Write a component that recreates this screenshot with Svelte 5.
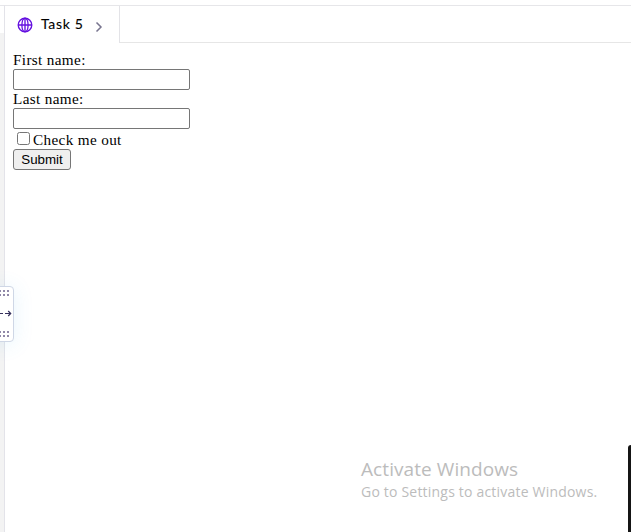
<script>
  let first = $state('');
  let last = $state('');
  let checked = $state(false);
  const dotRows = [0, 4];
  const dotCols = [-1, 3, 7];
</script>

{#snippet dots()}
  <svg class="dots" width="9" height="6" viewBox="0 0 9 6" shape-rendering="crispEdges">
    {#each dotRows as y}
      {#each dotCols as x}
        <rect {x} {y} width="2" height="2" />
      {/each}
    {/each}
  </svg>
{/snippet}

<div class="page">
  <div class="gutter"></div>
  <main>
    <header>
      <div class="tab">
        <svg class="globe" width="16" height="16" viewBox="0 0 16 16">
          <circle cx="8" cy="8" r="6.8" />
          <ellipse cx="8" cy="8" rx="3.1" ry="6.8" />
          <path d="M1.2 8h13.6M8 1.2v13.6" />
        </svg>
        <span>Task 5</span>
        <svg class="chevron" width="8" height="12" viewBox="0 0 8 12"><path d="M1.5 1.5 6 6 1.5 10.5" /></svg>
      </div>
      <div class="rest"></div>
    </header>
    <form onsubmit={(e) => e.preventDefault()}>
      <label for="first">First name:</label>
      <input id="first" class="field" type="text" bind:value={first} />
      <label for="last">Last name:</label>
      <input id="last" class="field" type="text" bind:value={last} />
      <div class="check">
        <input id="check" type="checkbox" bind:checked />
        <label for="check">Check me out</label>
      </div>
      <button>Submit</button>
    </form>
  </main>

  <div class="handle">
    {@render dots()}
    <svg class="arrow" width="12" height="7" viewBox="0 0 12 7"><path d="M0 3.5h3M5 3.5h6M8.2 1l2.5 2.5L8.2 6" /></svg>
    {@render dots()}
  </div>
  <div class="watermark">
    <div class="big">Activate Windows</div>
    <div class="small">Go to Settings to activate Windows.</div>
  </div>
  <div class="edge"></div>
</div>

<style>
  .page {
    position: relative;
    box-sizing: border-box;
    width: 631px;
    height: 532px;
    padding-top: 5px;
    display: flex;
    overflow: hidden;
    background: #fff;
    font-family: "Liberation Serif", serif;
    color: #000;
  }
  .gutter {
    box-sizing: border-box;
    width: 4px;
    border-top: 1px solid #e6e6ea;
    background: linear-gradient(#fff 27px, #f3f3f3 27px);
  }
  main {
    flex: 1;
    border-left: 1px solid #e3e3e9;
  }
  header {
    display: flex;
    height: 38px;
    border-top: 1px solid #e6e6e9;
    box-sizing: border-box;
  }
  .tab {
    box-sizing: border-box;
    width: 115px;
    border-right: 1px solid #e3e3e7;
    padding-left: 12px;
    display: flex;
    align-items: center;
    font: 400 14px/18px Lato, sans-serif;
  }
  .tab span {
    width: 42px;
    margin: -1px 12px 0 8px;
    letter-spacing: 0.65px;
    white-space: nowrap;
    -webkit-text-stroke: 0.1px #000;
  }
  .rest {
    flex: 1;
    border-bottom: 1px solid #e6e6e6;
  }
  .globe {
    fill: none;
    stroke: #6410e0;
    stroke-width: 1.35;
  }
  .chevron {
    margin-top: 4px;
    fill: none;
    stroke: #78758f;
    stroke-width: 1.5;
  }
  form {
    display: flex;
    flex-direction: column;
    align-items: flex-start;
    padding: 8px 8px 0;
    font-size: 15.2px;
    letter-spacing: 0.36px;
  }
  form > label {
    height: 18px;
    line-height: 18px;
  }
  .field {
    box-sizing: border-box;
    width: 177px;
    height: 21px;
    margin: 0;
    border: 1px solid #767676;
    border-radius: 2px;
    padding: 1px 2px;
    font: 13px "Liberation Sans", sans-serif;
  }
  .check {
    display: flex;
    align-items: center;
    height: 20px;
  }
  .check input {
    margin: 0 3px 2px 4px;
    width: 13px;
    height: 13px;
  }
  .check label {
    line-height: 18px;
    margin-top: 2px;
  }
  button {
    box-sizing: border-box;
    width: 58px;
    height: 21px;
    padding: 0;
    border: 1px solid #767676;
    border-radius: 3px;
    background: #efefef;
    color: #000;
    font: 13.333px "Liberation Sans", sans-serif;
  }
  .handle {
    position: absolute;
    left: -12px;
    top: 286px;
    box-sizing: border-box;
    width: 26px;
    height: 56px;
    padding: 3px 3px 4px 11px;
    border: 1px solid #cfd7e6;
    border-radius: 4px;
    background: #fff;
    box-shadow: 0 2px 20px rgba(70, 180, 240, 0.13);
    display: flex;
    flex-direction: column;
    justify-content: space-between;
  }
  .dots {
    fill: #9088a8;
  }
  .arrow {
    fill: none;
    stroke: #35305c;
    stroke-width: 1.2;
  }
  .watermark {
    position: absolute;
    left: 361px;
    top: 456px;
    color: #bcbcbc;
    font-family: "Open Sans", sans-serif;
    font-weight: 400;
    white-space: nowrap;
  }
  .big {
    font-size: 19px;
    line-height: 26px;
    letter-spacing: 0.08px;
  }
  .small {
    font-size: 14px;
    line-height: 20px;
    letter-spacing: 0.2px;
  }
  .edge {
    position: absolute;
    left: 628px;
    top: 445px;
    width: 8px;
    height: 92px;
    border-radius: 3px;
    background: #151515;
  }
</style>
